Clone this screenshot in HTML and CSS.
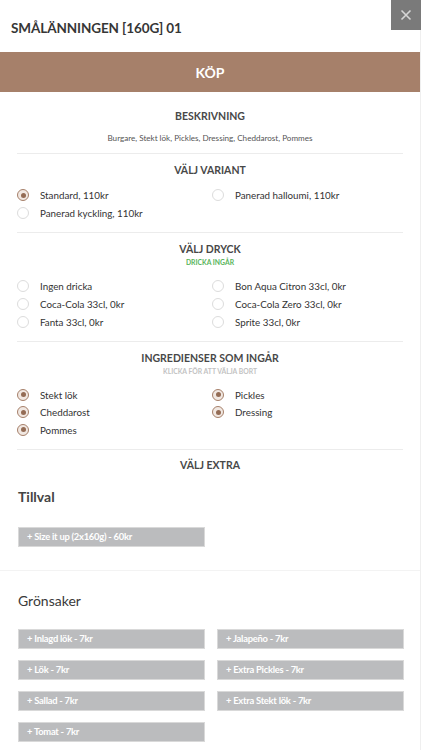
FILE: index.html
```html
<!DOCTYPE html>
<html lang="sv">
<head>
<meta charset="utf-8">
<title>Smålänningen</title>
<link rel="stylesheet" href="styles.css">
</head>
<body>
<div class="modal">
  <button class="close" aria-label="Stäng">
    <svg width="12" height="12" viewBox="0 0 12 12"><path d="M1.5 1.5 L10.5 10.5 M10.5 1.5 L1.5 10.5" stroke="#d6d6d6" stroke-width="1.6" fill="none"/></svg>
  </button>
  <header class="head">
    <h1 class="title">SMÅLÄNNINGEN [160G] 01</h1>
  </header>
  <div class="buy">KÖP</div>

  <div class="content">
    <section class="sec first">
      <h2 class="sec-title">BESKRIVNING</h2>
      <p class="desc">Burgare, Stekt lök, Pickles, Dressing, Cheddarost, Pommes</p>
    </section>

    <section class="sec">
      <h2 class="sec-title">VÄLJ VARIANT</h2>
      <div class="opts">
        <label class="opt"><span class="radio on"></span>Standard, 110kr</label>
        <label class="opt"><span class="radio"></span>Panerad halloumi, 110kr</label>
        <label class="opt"><span class="radio"></span>Panerad kyckling, 110kr</label>
      </div>
    </section>

    <section class="sec">
      <h2 class="sec-title">VÄLJ DRYCK</h2>
      <div class="sub green">DRICKA INGÅR</div>
      <div class="opts">
        <label class="opt"><span class="radio"></span>Ingen dricka</label>
        <label class="opt"><span class="radio"></span>Bon Aqua Citron 33cl, 0kr</label>
        <label class="opt"><span class="radio"></span>Coca-Cola 33cl, 0kr</label>
        <label class="opt"><span class="radio"></span>Coca-Cola Zero 33cl, 0kr</label>
        <label class="opt"><span class="radio"></span>Fanta 33cl, 0kr</label>
        <label class="opt"><span class="radio"></span>Sprite 33cl, 0kr</label>
      </div>
    </section>

    <section class="sec">
      <h2 class="sec-title">INGREDIENSER SOM INGÅR</h2>
      <div class="sub grey">KLICKA FÖR ATT VÄLJA BORT</div>
      <div class="opts ingr">
        <label class="opt"><span class="radio on"></span>Stekt lök</label>
        <label class="opt"><span class="radio on"></span>Pickles</label>
        <label class="opt"><span class="radio on"></span>Cheddarost</label>
        <label class="opt"><span class="radio on"></span>Dressing</label>
        <label class="opt"><span class="radio on"></span>Pommes</label>
      </div>
    </section>

    <section class="sec last">
      <h2 class="sec-title">VÄLJ EXTRA</h2>
    </section>
  </div>

  <section class="extra tillval">
    <h3 class="extra-title">Tillval</h3>
    <div class="btns">
      <button class="add">+ Size it up (2x160g) - 60kr</button>
    </div>
  </section>

  <section class="extra gron">
    <h3 class="extra-title">Grönsaker</h3>
    <div class="btns">
      <button class="add">+ Inlagd lök - 7kr</button>
      <button class="add">+ Jalapeño - 7kr</button>
      <button class="add">+ Lök - 7kr</button>
      <button class="add">+ Extra Pickles - 7kr</button>
      <button class="add">+ Sallad - 7kr</button>
      <button class="add">+ Extra Stekt lök - 7kr</button>
      <button class="add">+ Tomat - 7kr</button>
    </div>
  </section>
</div>
</body>
</html>
```

FILE: styles.css
```css
* { box-sizing: border-box; }
html, body { margin: 0; padding: 0; background: #fff; }
body {
  font-family: Lato, "Liberation Sans", sans-serif;
  color: #333;
  overflow: hidden;
}
.modal {
  position: relative;
  width: 421px;
  min-height: 750px;
  border-right: 1px solid #efefef;
  background: #fff;
}
.close {
  position: absolute;
  top: 0;
  right: -1px;
  width: 30px;
  height: 30px;
  border: 0;
  padding: 0;
  background: #7a7a7a;
  display: flex;
  align-items: center;
  justify-content: center;
}
.head {
  height: 52px;
  display: flex;
  align-items: center;
  padding: 4px 11px 0;
}
.title {
  margin: 0;
  font-size: 13.5px;
  font-weight: 700;
  color: #363636;
  letter-spacing: -0.1px;
}
.buy {
  height: 40px;
  background: #a6806a;
  color: #fff;
  font-weight: 700;
  font-size: 14px;
  display: flex;
  align-items: center;
  justify-content: center;
}
.content { padding: 0 17px; }
.sec {
  border-bottom: 1px solid #ececec;
  padding: 9px 0 10px;
}
.sec.first { padding-top: 17px; padding-bottom: 9px; }
.sec.last { border-bottom: 0; padding-bottom: 0; padding-top: 8px; }
.sec-title {
  margin: 0;
  font-size: 10.5px;
  line-height: 14px;
  font-weight: 700;
  text-align: center;
  color: #484848;
}
.desc {
  margin: 9px 0 0;
  font-size: 8.1px;
  line-height: 12px;
  text-align: center;
  color: #555;
}
.sub {
  font-size: 6.8px;
  line-height: 10px;
  font-weight: 700;
  text-align: center;
  margin-top: 1px;
}
.green { color: #58b55a; }
.grey { color: #c2c2c2; }
.opts {
  display: grid;
  grid-template-columns: 195px 1fr;
  margin-top: 9px;
}
.sub + .opts { margin-top: 10px; }
.ingr { margin-top: 10px !important; }
.ingr .opt { height: 17.5px; }
.opt {
  height: 18px;
  display: flex;
  align-items: center;
  font-size: 9.8px;
  color: #333;
}
.radio {
  width: 12px;
  height: 12px;
  border-radius: 50%;
  border: 1px solid #dcdcdc;
  background: #fff;
  margin-right: 11px;
  flex: none;
  position: relative;
}
.radio.on {
  border: 1.5px solid #a6806a;
  background: #f1e8e2;
}
.radio.on::after {
  content: "";
  position: absolute;
  left: 50%;
  top: 50%;
  width: 5px;
  height: 5px;
  margin: -2.5px 0 0 -2.5px;
  border-radius: 50%;
  background: #946c55;
}
.extra { padding: 0 17px 0 18px; }
.tillval {
  padding-top: 16px;
  padding-bottom: 23px;
  border-bottom: 1px solid #f3f3f3;
}
.gron { padding-top: 21px; }
.extra-title {
  margin: 0;
  font-size: 14px;
  line-height: 18px;
  font-weight: 700;
  color: #444;
}
.gron .extra-title { font-weight: 400; color: #3a3a3a; }
.tillval .btns { margin-top: 21px; }
.gron .btns { margin-top: 19px; }
.btns {
  display: grid;
  grid-template-columns: 187px 187px;
  column-gap: 12px;
  row-gap: 11px;
}
.add {
  height: 20px;
  border: 1px solid #d9d9d9;
  background: #bbbcbe;
  color: #fff;
  font-family: Lato, "Liberation Sans", sans-serif;
  font-weight: 700;
  font-size: 9.4px;
  text-align: left;
  padding: 0 0 0 8px;
  letter-spacing: -0.25px;
}
```
